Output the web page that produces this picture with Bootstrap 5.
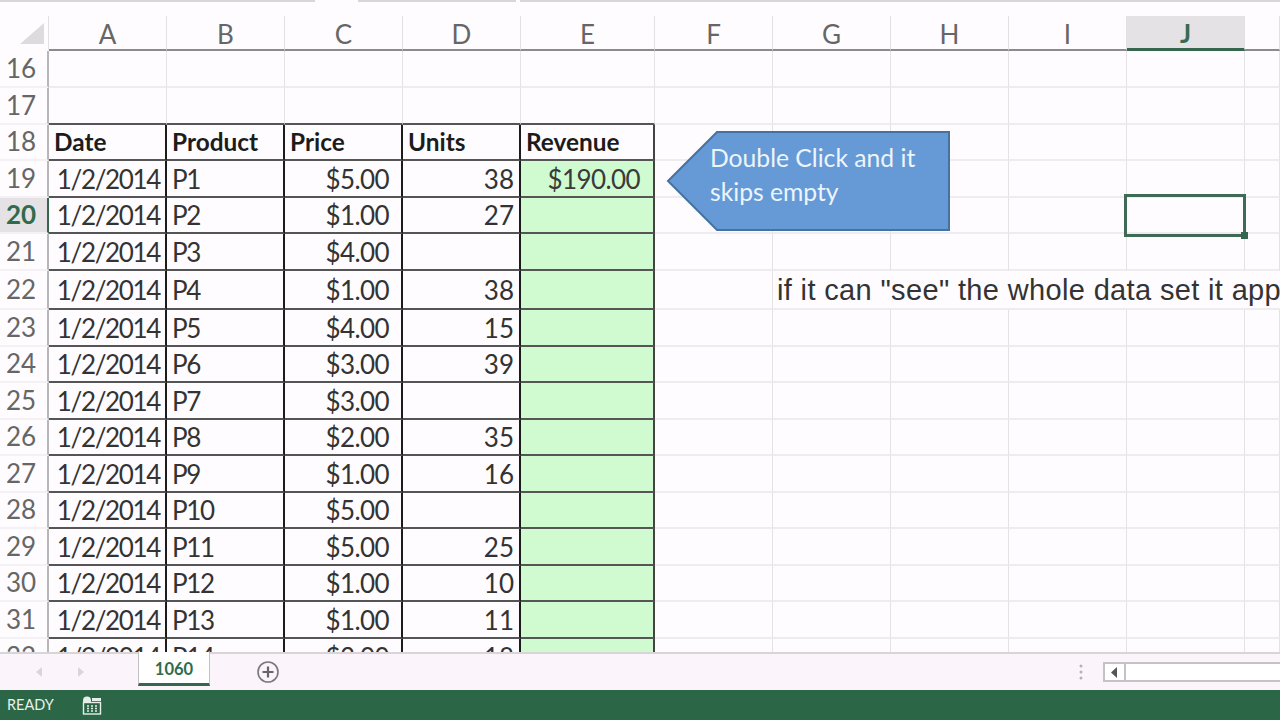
<!DOCTYPE html>
<html lang="en">
<head>
<meta charset="utf-8">
<title>1060</title>
<link href="https://cdn.jsdelivr.net/npm/bootstrap@5.3.0/dist/css/bootstrap.min.css" rel="stylesheet">
<style>
html,body{height:100%;overflow:hidden;background:#fefcfe}
body{font-family:Lato,"Open Sans",sans-serif;color:#333}
.app-shell{height:720px}
.top-strip{height:16px;gap:4px;flex:none}
.top-strip i{display:block;height:2px;background:#d8d6d8}
.seg-a{width:315px;margin-right:39px}
.seg-b{width:158px}
.seg-c{flex:1}
.sheet-area{height:636px;flex:none}
.sheet{table-layout:fixed;width:1280px;border-collapse:separate;border-spacing:0;font-size:26px;line-height:1;--bs-table-bg:transparent;--bs-table-color:#3a3a3a}
.c-rh{width:49px}.c-n{width:118px}.c-e{width:134px}.c-k{width:35px}
.sheet>thead>tr>th,.sheet>tbody>tr>td{padding:0 5px;box-shadow:none;background:transparent;border-style:solid;border-width:0 2px 2px 0;border-color:#eeecee;white-space:nowrap;vertical-align:middle;overflow:visible}
.sheet>thead>tr>th{height:35px;font-weight:400;text-align:center;color:#666;border-right:1px solid #e2e0e2;border-bottom-color:#8c8a8c;padding-top:2px}
.sheet>thead>tr>th.hd-sel{background:#e4e2e4;color:#3a6a52;font-weight:700;border-bottom:3px solid #36664e}
.sheet>thead>tr>th.hd-corner{border-bottom-color:transparent;padding:0}
.sheet>tbody>tr>td{border-right:1px solid #e4e2e4}
.sheet>tbody>tr>td.rh{text-align:center;color:#666;border-right:2px solid #b8b6b8;border-bottom-color:#f3f1f3;padding:0 5px 2px 0}
.sheet>tbody>tr>td.rh-sel{background:#e4e2e4;color:#2f6b4c;font-weight:700;border-right-color:#36664e}
.sheet>tbody>tr>td.dt{border-right:2px solid #1c1c1c;border-bottom:2px solid #555;color:#333}
.sheet>tbody>tr>td.dt-last{border-right-color:#444}
.sheet>tbody>tr>td.dt-top{border-bottom:2px solid #555}
.sheet>tbody>tr>td.fw-bold{color:#1c1c1c;font-size:24.4px}
.sheet>tbody>tr>td.fill{background:#d0fad0;color:#3a3a3a}
.sheet>tbody>tr>td.money{padding-right:12px;letter-spacing:-.6px}
.sheet>tbody>tr>td.fill.money{padding-right:13px}
.sheet>tbody>tr>td.day{letter-spacing:-1.35px}
.sheet>tbody>tr>td.code{letter-spacing:-1.4px}
.sheet>tbody>tr>td.note{font-family:"Liberation Sans",Arial,sans-serif;font-size:29px;letter-spacing:.35px;padding:2px 0 0 4px;border-right:0;color:#333}
.r36>td{height:36px}.r37>td{height:37px}.r39>td{height:39px}
.callout{left:666px;top:114px;width:285px;height:102px}
.callout svg{display:block}
.callout-text{left:44px;top:11px;color:#eef4fb;font-size:24.7px;line-height:34px;white-space:nowrap}
.cursor-box{left:1124px;top:178px;width:122px;height:43px;border:3px solid #3f6a55}
.cursor-handle{right:-5px;bottom:-5px;width:7px;height:7px;background:#36664e}
.tab-bar{height:38px;flex:none;background:#fbf4fb;border-top:2px solid #d8d4d8}
.nav-tri{margin-left:35px;margin-right:34px}
.nav-tri+.nav-tri{margin:0}
.sheet-tab{width:72px;height:34px;margin-left:53px;margin-top:-2px;padding-top:3px;background:#fff;border:solid #c4c2c4;border-width:0 1px;border-bottom:3px solid #36664e;color:#2f6b4c;font-weight:700;font-size:16.5px}
.add-tab{margin-left:46px}
.tab-dots{margin-right:20px}
.h-scroll{width:177px;height:20px;border:2px solid #c4c2c4;border-right:0;background:#fff}
.h-scroll-btn{width:21px;border-right:2px solid #c4c2c4}
.status-bar{height:30px;flex:none;background:#2b6747;color:#e9f1ec;font-size:14.5px;padding-left:7px}
.status-icon{margin-left:28px}
</style>
</head>
<body>
<div class="app-shell d-flex flex-column">
  <div class="top-strip d-flex"><i class="seg-a"></i><i class="seg-b"></i><i class="seg-c"></i></div>
  <div class="sheet-area position-relative overflow-hidden">
    <table class="table sheet mb-0">
      <colgroup><col class="c-rh"><col class="c-n"><col class="c-n"><col class="c-n"><col class="c-n"><col class="c-e"><col class="c-n"><col class="c-n"><col class="c-n"><col class="c-n"><col class="c-n"><col class="c-k"></colgroup>
      <thead><tr>
        <th class="hd-corner"><svg width="48" height="33" viewBox="0 0 48 33"><polygon points="20,28 44,7 44,28" fill="#dddbdd"/></svg></th>
        <th>A</th><th>B</th><th>C</th><th>D</th><th>E</th><th>F</th><th>G</th><th>H</th><th>I</th><th class="hd-sel">J</th><th></th>
      </tr></thead>
      <tbody>
        <tr class="r37"><td class="rh">16</td><td></td><td></td><td></td><td></td><td></td><td></td><td></td><td></td><td></td><td></td><td></td></tr>
        <tr class="r37"><td class="rh">17</td><td class="dt-top"></td><td class="dt-top"></td><td class="dt-top"></td><td class="dt-top"></td><td class="dt-top"></td><td></td><td></td><td></td><td></td><td></td><td></td></tr>
        <tr class="r36"><td class="rh">18</td><td class="dt fw-bold">Date</td><td class="dt fw-bold">Product</td><td class="dt fw-bold">Price</td><td class="dt fw-bold">Units</td><td class="dt dt-last fw-bold">Revenue</td><td></td><td></td><td></td><td></td><td></td><td></td></tr>
        <tr class="r37"><td class="rh">19</td><td class="dt day text-end">1/2/2014</td><td class="dt code">P1</td><td class="dt money text-end">$5.00</td><td class="dt text-end">38</td><td class="dt dt-last fill money text-end">$190.00</td><td></td><td></td><td></td><td></td><td></td><td></td></tr>
        <tr class="r36"><td class="rh rh-sel">20</td><td class="dt day text-end">1/2/2014</td><td class="dt code">P2</td><td class="dt money text-end">$1.00</td><td class="dt text-end">27</td><td class="dt dt-last fill"></td><td></td><td></td><td></td><td></td><td></td><td></td></tr>
        <tr class="r37"><td class="rh">21</td><td class="dt day text-end">1/2/2014</td><td class="dt code">P3</td><td class="dt money text-end">$4.00</td><td class="dt text-end"></td><td class="dt dt-last fill"></td><td></td><td></td><td></td><td></td><td></td><td></td></tr>
        <tr class="r39"><td class="rh">22</td><td class="dt day text-end">1/2/2014</td><td class="dt code">P4</td><td class="dt money text-end">$1.00</td><td class="dt text-end">38</td><td class="dt dt-last fill"></td><td></td><td class="note" colspan="5">if it can "see" the whole data set it app</td></tr>
        <tr class="r37"><td class="rh">23</td><td class="dt day text-end">1/2/2014</td><td class="dt code">P5</td><td class="dt money text-end">$4.00</td><td class="dt text-end">15</td><td class="dt dt-last fill"></td><td></td><td></td><td></td><td></td><td></td><td></td></tr>
        <tr class="r36"><td class="rh">24</td><td class="dt day text-end">1/2/2014</td><td class="dt code">P6</td><td class="dt money text-end">$3.00</td><td class="dt text-end">39</td><td class="dt dt-last fill"></td><td></td><td></td><td></td><td></td><td></td><td></td></tr>
        <tr class="r37"><td class="rh">25</td><td class="dt day text-end">1/2/2014</td><td class="dt code">P7</td><td class="dt money text-end">$3.00</td><td class="dt text-end"></td><td class="dt dt-last fill"></td><td></td><td></td><td></td><td></td><td></td><td></td></tr>
        <tr class="r36"><td class="rh">26</td><td class="dt day text-end">1/2/2014</td><td class="dt code">P8</td><td class="dt money text-end">$2.00</td><td class="dt text-end">35</td><td class="dt dt-last fill"></td><td></td><td></td><td></td><td></td><td></td><td></td></tr>
        <tr class="r37"><td class="rh">27</td><td class="dt day text-end">1/2/2014</td><td class="dt code">P9</td><td class="dt money text-end">$1.00</td><td class="dt text-end">16</td><td class="dt dt-last fill"></td><td></td><td></td><td></td><td></td><td></td><td></td></tr>
        <tr class="r36"><td class="rh">28</td><td class="dt day text-end">1/2/2014</td><td class="dt code">P10</td><td class="dt money text-end">$5.00</td><td class="dt text-end"></td><td class="dt dt-last fill"></td><td></td><td></td><td></td><td></td><td></td><td></td></tr>
        <tr class="r37"><td class="rh">29</td><td class="dt day text-end">1/2/2014</td><td class="dt code">P11</td><td class="dt money text-end">$5.00</td><td class="dt text-end">25</td><td class="dt dt-last fill"></td><td></td><td></td><td></td><td></td><td></td><td></td></tr>
        <tr class="r36"><td class="rh">30</td><td class="dt day text-end">1/2/2014</td><td class="dt code">P12</td><td class="dt money text-end">$1.00</td><td class="dt text-end">10</td><td class="dt dt-last fill"></td><td></td><td></td><td></td><td></td><td></td><td></td></tr>
        <tr class="r37"><td class="rh">31</td><td class="dt day text-end">1/2/2014</td><td class="dt code">P13</td><td class="dt money text-end">$1.00</td><td class="dt text-end">11</td><td class="dt dt-last fill"></td><td></td><td></td><td></td><td></td><td></td><td></td></tr>
        <tr class="r37"><td class="rh">32</td><td class="dt day text-end">1/2/2014</td><td class="dt code">P14</td><td class="dt money text-end">$3.00</td><td class="dt text-end">18</td><td class="dt dt-last fill"></td><td></td><td></td><td></td><td></td><td></td><td></td></tr>
      </tbody>
    </table>
    <div class="callout position-absolute">
      <svg width="285" height="102" viewBox="0 0 285 102"><polygon points="2,51 51,2 283,2 283,100 51,100" fill="#659ad6" stroke="#47729f" stroke-width="2"/></svg>
      <div class="callout-text position-absolute">Double Click and it<br>skips empty</div>
    </div>
    <div class="cursor-box position-absolute"><div class="cursor-handle position-absolute"></div></div>
  </div>
  <div class="tab-bar d-flex align-items-center">
    <svg class="nav-tri" width="8" height="12" viewBox="0 0 8 12"><polygon points="7,1 1,6 7,11" fill="#d8d6d8"/></svg>
    <svg class="nav-tri" width="8" height="12" viewBox="0 0 8 12"><polygon points="1,1 7,6 1,11" fill="#d8d6d8"/></svg>
    <div class="sheet-tab d-flex align-items-center justify-content-center align-self-start">1060</div>
    <svg class="add-tab" width="24" height="24" viewBox="0 0 24 24"><circle cx="12" cy="12" r="10" fill="none" stroke="#7a787a" stroke-width="1.6"/><path d="M12 6.5v11M6.5 12h11" stroke="#666" stroke-width="2.2"/></svg>
    <svg class="tab-dots ms-auto" width="4" height="16" viewBox="0 0 4 16"><circle cx="2" cy="2" r="1.5" fill="#b4b2b4"/><circle cx="2" cy="8" r="1.5" fill="#b4b2b4"/><circle cx="2" cy="14" r="1.5" fill="#b4b2b4"/></svg>
    <div class="h-scroll d-flex">
      <div class="h-scroll-btn d-flex align-items-center justify-content-center"><svg width="7" height="11" viewBox="0 0 7 11"><polygon points="6,0 0,5.5 6,11" fill="#555"/></svg></div>
    </div>
  </div>
  <div class="status-bar d-flex align-items-center">
    <span>READY</span>
    <svg class="status-icon" width="20" height="19" viewBox="0 0 20 19"><circle cx="5" cy="4.5" r="4" fill="#e6eee9"/><rect x="10" y="2" width="9" height="3" fill="#e6eee9"/><rect x="1.5" y="6.5" width="17" height="11.5" fill="#2b6747" stroke="#e6eee9" stroke-width="1.4"/><path d="M5 10h2m2 0h2m2 0h2M5 12.5h2m2 0h2m2 0h2M5 15h2m2 0h2m2 0h2" stroke="#e6eee9" stroke-width="1.4"/></svg>
  </div>
</div>
<script src="https://cdn.jsdelivr.net/npm/bootstrap@5.3.0/dist/js/bootstrap.bundle.min.js"></script>
</body>
</html>
